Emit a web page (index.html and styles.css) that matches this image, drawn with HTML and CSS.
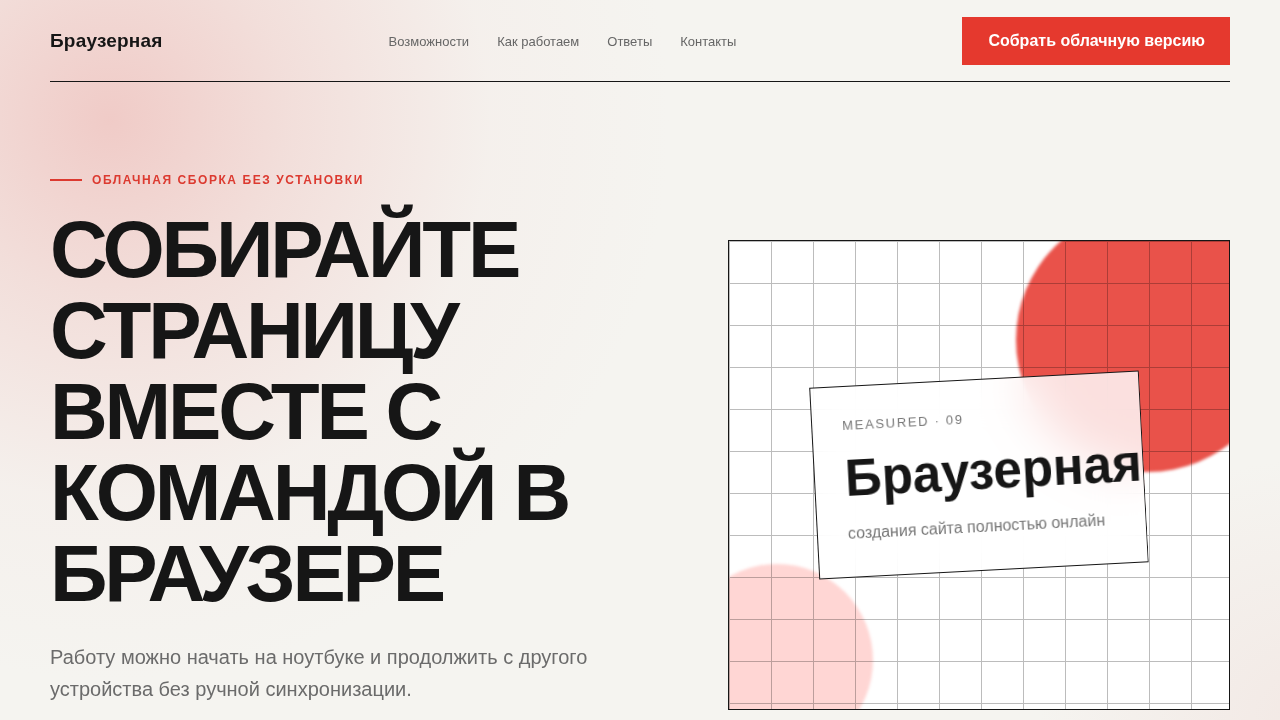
FILE: index.html
```html
<!DOCTYPE html>
<html lang="ru">
<head>
<meta charset="utf-8">
<title>Браузерная</title>
<link rel="stylesheet" href="styles.css">
</head>
<body>
<div class="page">
  <header class="header">
    <a class="logo" href="#">Браузерная</a>
    <nav class="nav">
      <a href="#">Возможности</a>
      <a href="#">Как работаем</a>
      <a href="#">Ответы</a>
      <a href="#">Контакты</a>
    </nav>
    <a class="btn" href="#">Собрать облачную версию</a>
  </header>
  <main class="hero">
    <div class="hero-text">
      <div class="eyebrow"><span class="eyebrow-line"></span>Облачная сборка без установки</div>
      <h1 class="title">Собирайте страницу вместе с командой в браузере</h1>
      <p class="lead">Работу можно начать на ноутбуке и продолжить с другого устройства без ручной синхронизации.</p>
    </div>
    <div class="visual">
      <div class="blob blob-red"></div>
      <div class="blob blob-pink"></div>
      <div class="card">
        <div class="card-eyebrow">MEASURED · 09</div>
        <div class="card-title">Браузерная</div>
        <div class="card-sub">создания сайта полностью онлайн</div>
      </div>
    </div>
  </main>
</div>
</body>
</html>
```
FILE: styles.css
```css
* { box-sizing: border-box; }
html, body { margin: 0; padding: 0; }
body {
  font-family: "Liberation Sans", Arial, sans-serif;
  color: #161616;
  background-color: #f5f4f0;
  background-image:
    radial-gradient(circle at 110px 120px, rgba(239, 196, 192, 0.85) 0, rgba(240, 205, 201, 0.55) 180px, rgba(244, 228, 225, 0.25) 380px, rgba(245, 244, 240, 0) 560px),
    radial-gradient(circle at 1300px 720px, rgba(240, 222, 218, 0.5) 0, rgba(245, 244, 240, 0) 260px);
  min-height: 720px;
  overflow: hidden;
}
a { text-decoration: none; color: inherit; }
.page { padding: 0 50px; }

.header {
  display: flex;
  align-items: center;
  justify-content: space-between;
  padding: 17px 0 16px;
  border-bottom: 1px solid #161616;
}
.logo { font-size: 19px; font-weight: 700; letter-spacing: 0.01em; color: #161616; }
.nav { display: flex; gap: 28px; font-size: 13px; color: #666; }
.btn {
  display: flex;
  align-items: center;
  height: 48px;
  padding: 0 25px 0 26px;
  background: #e5392e;
  color: #fff;
  font-size: 16px;
  font-weight: 700;
}

.hero {
  display: grid;
  grid-template-columns: 1fr 502px;
  gap: 64px;
  align-items: start;
  padding-top: 91px;
}
.eyebrow {
  display: flex;
  align-items: center;
  gap: 10px;
  font-size: 12px;
  line-height: 14px;
  font-weight: 700;
  letter-spacing: 0.13em;
  text-transform: uppercase;
  color: #dc3a30;
}
.eyebrow-line { width: 32px; height: 2px; background: #dc3a30; }
.title {
  margin: 22px 0 0;
  font-size: 80px;
  line-height: 81px;
  font-weight: 700;
  letter-spacing: -0.04em;
  text-transform: uppercase;
  color: #161616;
}
.lead {
  margin: 27px 0 0;
  max-width: 580px;
  font-size: 20px;
  line-height: 32px;
  color: #6b6b6b;
}

.visual {
  position: relative;
  margin-top: 67px;
  height: 470px;
  border: 1px solid #161616;
  background-color: #fff;
  background-image:
    linear-gradient(to right, #bcbcbc 1px, transparent 1px),
    linear-gradient(to bottom, #bcbcbc 1px, transparent 1px);
  background-size: 42px 42px;
  overflow: hidden;
  display: flex;
  align-items: center;
  justify-content: center;
}
.blob {
  position: absolute;
  border-radius: 50%;
  mix-blend-mode: multiply;
  filter: blur(1.5px);
}
.blob-red {
  width: 264px;
  height: 264px;
  left: 287px;
  top: -33px;
  background: #e9524a;
}
.blob-pink {
  width: 192px;
  height: 192px;
  left: -48px;
  top: 323px;
  background: #ffd6d4;
}
.card {
  position: relative;
  z-index: 2;
  width: 330px;
  padding: 31px 30px 32px;
  border: 1px solid #161616;
  background: rgba(255, 255, 255, 0.82);
  -webkit-backdrop-filter: blur(24px);
  backdrop-filter: blur(24px);
  transform: rotate(-3deg);
  white-space: nowrap;
}
.card-eyebrow {
  font-size: 13px;
  line-height: 16px;
  letter-spacing: 0.13em;
  color: #777;
}
.card-title {
  margin-top: 17px;
  font-size: 51px;
  line-height: 55px;
  font-weight: 700;
  color: #161616;
}
.card-sub {
  margin-top: 17px;
  font-size: 16px;
  line-height: 22px;
  color: #777;
}
```
